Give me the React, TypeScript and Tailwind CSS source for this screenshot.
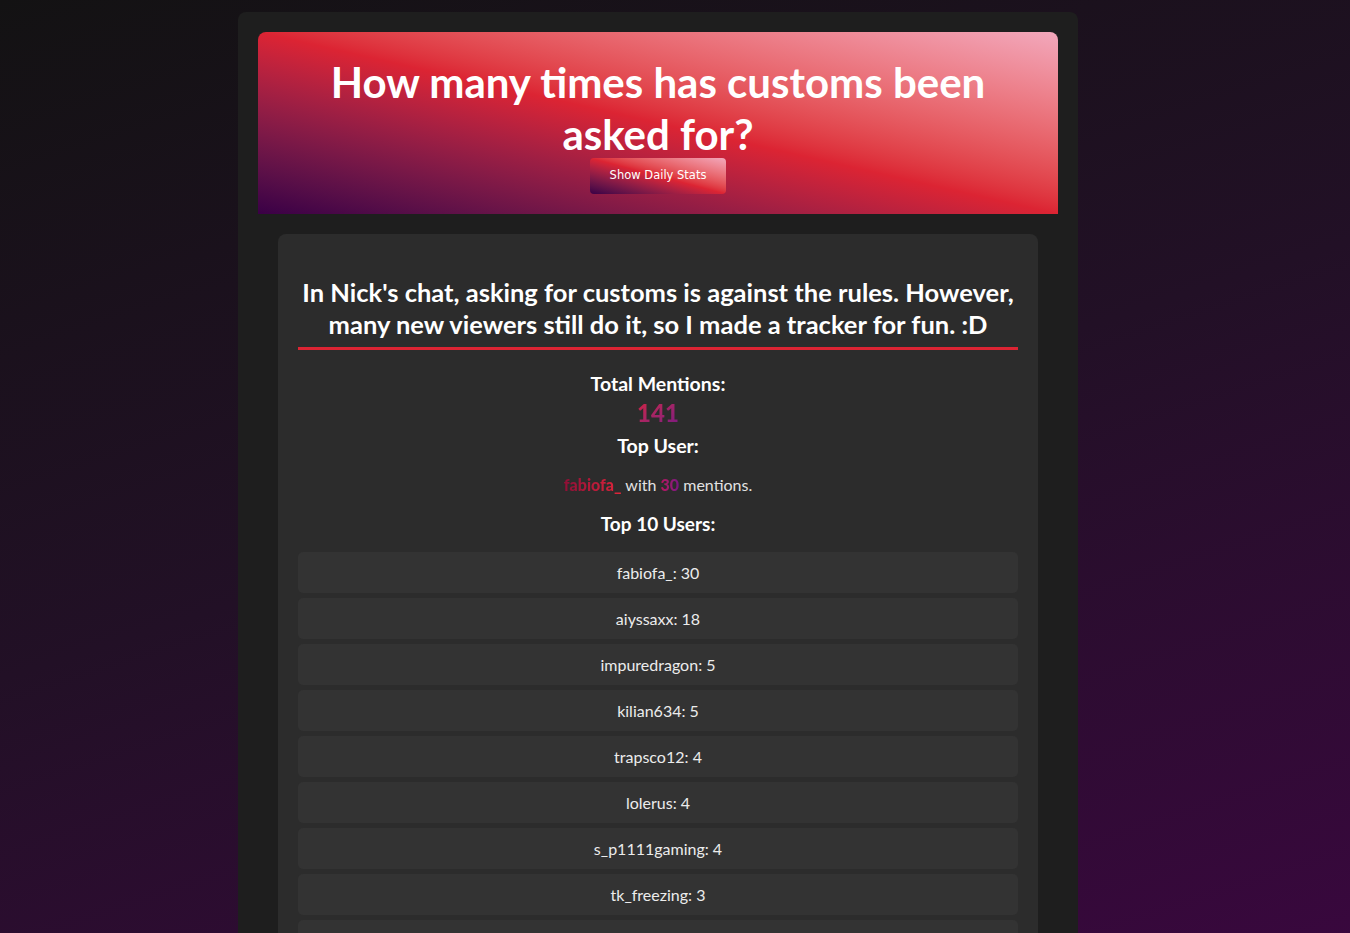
const topUsers = [
  { name: "fabiofa_", count: 30 },
  { name: "aiyssaxx", count: 18 },
  { name: "impuredragon", count: 5 },
  { name: "kilian634", count: 5 },
  { name: "trapsco12", count: 4 },
  { name: "lolerus", count: 4 },
  { name: "s_p1111gaming", count: 4 },
  { name: "tk_freezing", count: 3 },
  { name: "xsniperwolfx", count: 3 },
  { name: "m4rcus_tv", count: 2 },
];

export default function App() {
  return (
    <div className="min-h-screen bg-[linear-gradient(162deg,#131213_0%,#221026_45%,#3d0642_100%)] pt-3 pb-6 font-['Lato',sans-serif] text-[#e6e6e6]">
      <div className="ml-[238px] w-[840px] rounded-lg bg-[#1e1e1e] p-5">
        {/* Header */}
        <header className="flex flex-col items-center rounded-t-lg bg-gradient-to-tr from-[#3a0046] via-[#dc2433] to-[#f2a8bc] px-5 pt-6 pb-5 text-center">
          <h1 className="text-[42px] font-bold leading-[52px] text-white">
            How many times has customs been
            <br />
            asked for?
          </h1>
          <button
            type="button"
            className="-mt-0.5 h-9 w-[136px] rounded bg-gradient-to-tr from-[#3a0046] via-[#dc2433] to-[#f2a8bc] font-['DejaVu_Sans',sans-serif] text-[11.5px] text-white"
          >
            Show Daily Stats
          </button>
        </header>

        {/* Stats card */}
        <div className="mx-5 mt-5 rounded-lg bg-[#2c2c2c] px-5 pt-5 pb-5 text-center">
          <h2 className="mt-[22px] border-b-[3px] border-[#dc2433] pb-[7px] text-[25.5px] font-bold leading-[32px] text-white">
            In Nick's chat, asking for customs is against the rules. However,
            <br />
            many new viewers still do it, so I made a tracker for fun. :D
          </h2>

          <h3 className="mt-[22px] text-[19.5px] font-bold leading-6 text-white">
            Total Mentions:
          </h3>
          <p className="mt-[5px] text-[24px] font-black leading-6">
            <span className="bg-gradient-to-br from-[#d41e3a] to-[#7a1482] bg-clip-text text-transparent">
              141
            </span>
          </p>

          <h3 className="mt-[9px] text-[19.5px] font-bold leading-6 text-white">
            Top User:
          </h3>
          <p className="mt-[15px] text-[16px] leading-6 text-[#e2e2e2]">
            <span className="bg-gradient-to-r from-[#8e0f36] to-[#e2263a] bg-clip-text font-black text-transparent">
              fabiofa_
            </span>{" "}
            with{" "}
            <span className="bg-gradient-to-r from-[#b8125e] to-[#7a1482] bg-clip-text font-black text-transparent">
              30
            </span>{" "}
            mentions.
          </p>

          <h3 className="mt-[15px] text-[19px] font-bold leading-6 text-white">
            Top 10 Users:
          </h3>

          <ul className="mt-4 flex flex-col gap-[5px]">
            {topUsers.map((u) => (
              <li
                key={u.name}
                className="flex h-[41px] items-center justify-center rounded-[5px] bg-[#333333] text-[16px] text-[#ececec]"
              >
                {u.name}: {u.count}
              </li>
            ))}
          </ul>
        </div>
      </div>
    </div>
  );
}
